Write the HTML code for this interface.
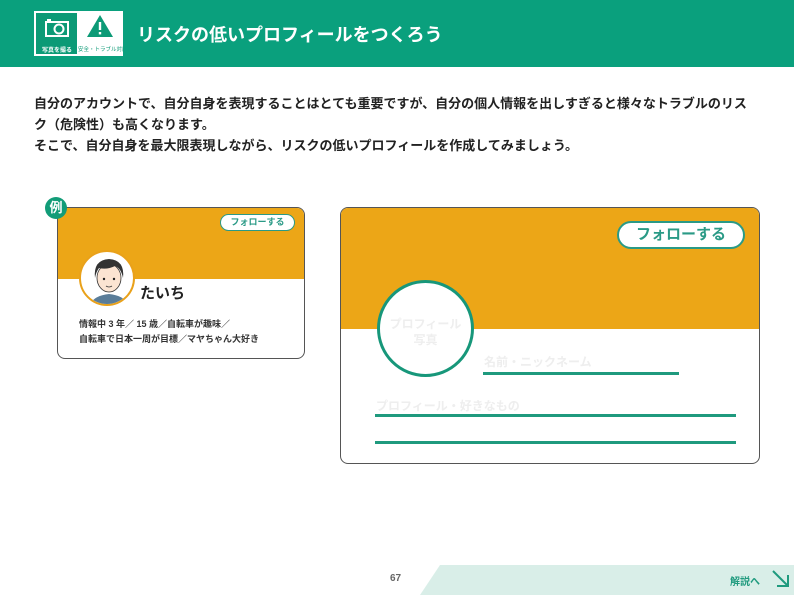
<!DOCTYPE html>
<html><head><meta charset="utf-8">
<style>
*{margin:0;padding:0;box-sizing:border-box}
body{width:794px;height:595px;position:relative;overflow:hidden;background:#fff;font-family:"Liberation Sans","Noto Sans CJK JP",sans-serif;color:#222}
.hdr{position:absolute;left:0;top:0;width:794px;height:67px;background:#0aa07d}
.ib{position:absolute;left:34px;top:11px;width:89px;height:45px;background:#fff}
.ib1{position:absolute;left:36px;top:13px;width:41px;height:41px;background:#0c9a76}
.title{position:absolute;left:137px;top:21px;color:#fff;font-size:18px;font-weight:bold;letter-spacing:0}
.txt{position:absolute;left:34px;top:93px;font-size:13px;font-weight:bold;line-height:21px;letter-spacing:0;color:#222}
.card1{position:absolute;left:57px;top:207px;width:248px;height:152px;border:1px solid #555;border-radius:8px;overflow:hidden;background:#fff}
.card1 .top{height:71px;background:#eca617}
.rei{position:absolute;left:45px;top:197px;width:22px;height:22px;border-radius:11px;background:#129c78;color:#fff;font-size:13px;font-weight:bold;text-align:center;line-height:22px}
.fb1{position:absolute;left:220px;top:214px;width:75px;height:17px;border:1.5px solid #2a9a86;border-radius:9px;background:#fff;color:#2a9a86;font-size:9px;font-weight:bold;text-align:center;line-height:14px}
.av{position:absolute;left:79px;top:250px;width:56px;height:56px;border-radius:50%;border:2px solid #e9a11a;background:#fff;overflow:hidden}
.card2{position:absolute;left:340px;top:207px;width:420px;height:257px;border:1px solid #555;border-radius:8px;overflow:hidden;background:#fff}
.card2 .top{height:121px;background:#eca617}
.fb2{position:absolute;left:617px;top:221px;width:128px;height:28px;border:2px solid #2a9a86;border-radius:14px;background:#fff;color:#2a9a86;font-size:15px;font-weight:bold;text-align:center;line-height:24px}
.circ{position:absolute;left:377px;top:280px;width:97px;height:97px;border-radius:50%;border:3px solid #17977a;background:#fff;color:#eee;font-size:12px;font-weight:bold;text-align:center;padding-top:33px;line-height:16px}
.ln{position:absolute;height:3px;background:#1f9a7e}
.ph{position:absolute;color:#eee;font-size:12px;font-weight:bold}
.foot{position:absolute;left:420px;top:565px;width:374px;height:30px;background:#d9eee8;clip-path:polygon(20px 0,100% 0,100% 100%,0 100%)}
</style></head><body>
<div class="hdr"></div>
<div class="ib"></div>
<div class="ib1"></div>
<svg style="position:absolute;left:44px;top:18px" width="26" height="20" viewBox="0 0 26 20"><rect x="2" y="4" width="22" height="14" fill="none" stroke="#fff" stroke-width="2"/><rect x="3" y="1" width="4" height="3" fill="#fff"/><circle cx="15" cy="11" r="4.5" fill="none" stroke="#fff" stroke-width="2"/></svg>
<div style="position:absolute;left:37px;top:45px;width:40px;font-size:6px;color:#fff;font-weight:bold;text-align:center">写真を撮る</div>
<svg style="position:absolute;left:86px;top:14px" width="28" height="24" viewBox="0 0 28 24"><path d="M14 1 L27 23 L1 23 Z" fill="#0c9a76"/><rect x="12.8" y="8" width="2.4" height="8" fill="#fff"/><rect x="12.8" y="18" width="2.4" height="2.4" fill="#fff"/></svg>
<div style="position:absolute;left:78px;top:45px;width:45px;font-size:5.5px;color:#0c9a76;text-align:center;white-space:nowrap;overflow:hidden">安全・トラブル対応</div>
<div class="title">リスクの低いプロフィールをつくろう</div>
<div class="txt">自分のアカウントで、自分自身を表現することはとても重要ですが、自分の個人情報を出しすぎると様々なトラブルのリス<br>ク（危険性）も高くなります。<br>そこで、自分自身を最大限表現しながら、リスクの低いプロフィールを作成してみましょう。</div>

<div class="card1"><div class="top"></div></div>
<div class="rei">例</div>
<div class="fb1">フォローする</div>
<div class="av"><svg width="56" height="56" viewBox="0 0 56 56"><path d="M8 56 Q10 44 28 42 Q46 44 48 56Z" fill="#5a7d99"/><ellipse cx="28" cy="26" rx="12" ry="14" fill="#fbe4d2" stroke="#333" stroke-width=".8"/><path d="M14 26 Q12 8 28 7 Q44 8 42 26 Q40 16 34 14 Q26 18 18 16 Q15 20 14 26Z" fill="#333"/><circle cx="23" cy="27" r="1.2" fill="#222"/><circle cx="33" cy="27" r="1.2" fill="#222"/><path d="M25 34 Q28 36 31 34" stroke="#333" fill="none" stroke-width=".8"/></svg></div>
<div style="position:absolute;left:140px;top:282px;font-size:15px;font-weight:bold">たいち</div>
<div style="position:absolute;left:79px;top:317px;font-size:9px;line-height:15px;color:#333;font-weight:bold">情報中 3 年／ 15 歳／自転車が趣味／<br>自転車で日本一周が目標／マヤちゃん大好き</div>

<div class="card2"><div class="top"></div></div>
<div class="fb2">フォローする</div>
<div class="circ">プロフィール<br>写真</div>
<div class="ph" style="left:484px;top:353px">名前・ニックネーム</div>
<div class="ln" style="left:483px;top:372px;width:196px"></div>
<div class="ph" style="left:376px;top:397px">プロフィール・好きなもの</div>
<div class="ln" style="left:375px;top:414px;width:361px"></div>
<div class="ln" style="left:375px;top:441px;width:361px"></div>

<div class="foot"></div>
<div style="position:absolute;left:390px;top:573px;font-size:10px;font-weight:bold;color:#666">67</div>
<div style="position:absolute;left:730px;top:573px;font-size:10px;font-weight:bold;color:#1f9a7e">解説へ</div>
<svg style="position:absolute;left:771px;top:569px" width="20" height="20" viewBox="0 0 20 20"><path d="M2 2 L17 17 M17 6 L17 17 L6 17" stroke="#1f9a7e" stroke-width="2" fill="none"/></svg>
</body></html>
